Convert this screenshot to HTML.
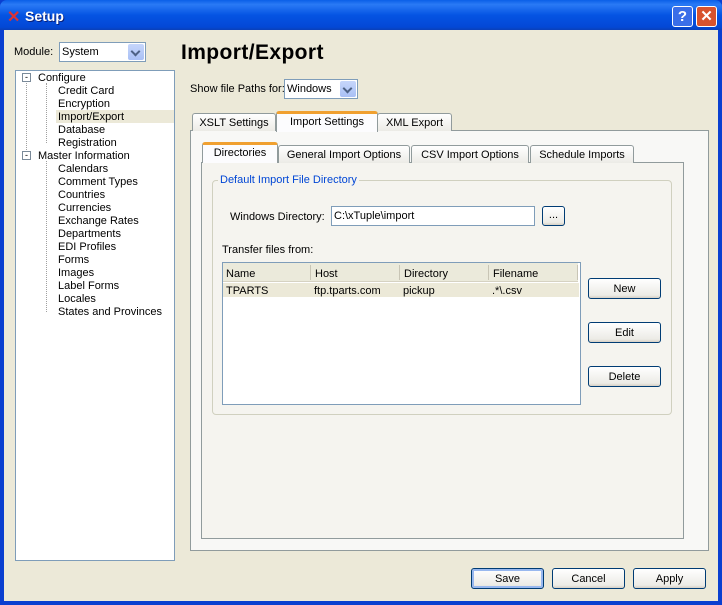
<!DOCTYPE html>
<html><head><style>
*{box-sizing:border-box;margin:0;padding:0}
body{width:722px;height:605px;position:relative;overflow:hidden;font:11px "Liberation Sans",sans-serif;color:#000;background:#0a3fd0}
.a{position:absolute}
.win{left:4px;top:30px;width:714px;height:571px;background:#ece9d8}
.title{left:0;top:0;width:722px;height:30px;background:linear-gradient(#0a5fe8,#2a7af5 15%,#0554e3 50%,#0348d6 90%,#0a3fb8);border-radius:7px 7px 0 0}
.combo{background:#fff;border:1px solid #7f9db9}
.dd{position:absolute;right:1px;top:1px;bottom:1px;width:16px;background:linear-gradient(#c6d6fb,#a9c0f5);border-radius:2px}
.dd:after{content:"";position:absolute;left:4px;top:4px;width:5px;height:5px;border-right:2px solid #4d6185;border-bottom:2px solid #4d6185;transform:rotate(45deg)}
.tab{border:1px solid #919b9c;border-bottom:none;border-radius:3px 3px 0 0;background:linear-gradient(#fff,#ecebe6);text-align:center;line-height:18px}
.tab.sel{background:#fcfcfe;border-top:3px solid #f0a030;line-height:17px}
.pane{border:1px solid #919b9c;background:#f8f8f6}
.btn{border:1px solid #003c74;border-radius:3px;background:linear-gradient(#fff,#ecebe6 85%,#d6d0c5);text-align:center;line-height:20px}
.tree div{position:absolute;white-space:nowrap}
</style></head><body>
<div class="a title"></div>
<div class="a" style="left:7px;top:7px;color:#d33;font:bold 16px 'Liberation Sans';">✕</div>
<div class="a" style="left:25px;top:8px;color:#fff;font:bold 14px 'Liberation Sans',sans-serif;text-shadow:1px 1px #0a1e78">Setup</div>
<div class="a" style="left:672px;top:6px;width:21px;height:21px;border:1px solid #fff;border-radius:3px;background:#3a6ee8;color:#fff;font:bold 15px 'Liberation Sans';text-align:center;line-height:19px">?</div>
<div class="a" style="left:696px;top:6px;width:21px;height:21px;border:1px solid #fff;border-radius:3px;background:#d8532d;color:#fff;font:bold 15px 'Liberation Sans';text-align:center;line-height:19px">✕</div>
<div class="a win"></div>

<div class="a" style="left:14px;top:46px">Module:</div>
<div class="a combo" style="left:59px;top:42px;width:87px;height:20px"><span style="position:absolute;left:2px;top:3px">System</span><div class="dd"></div></div>

<div class="a" style="left:15px;top:70px;width:160px;height:491px;background:#fff;border:1px solid #7f9db9"></div>
<div class="a" style="left:56px;top:110px;width:118px;height:13px;background:#ece9d8"></div>
<div class="a" style="left:26px;top:83px;height:75px;border-left:1px dotted #a0a0a0"></div>
<div class="a" style="left:46px;top:83px;height:60px;border-left:1px dotted #a0a0a0"></div>
<div class="a" style="left:46px;top:161px;height:151px;border-left:1px dotted #a0a0a0"></div>
<div class="a" style="left:22px;top:73px;width:9px;height:9px;border:1px solid #7a8a99;background:#fff;font-size:9px;line-height:6px;text-align:center">-</div>
<div class="a" style="left:22px;top:151px;width:9px;height:9px;border:1px solid #7a8a99;background:#fff;font-size:9px;line-height:6px;text-align:center">-</div>
<div class="a tree" style="left:0;top:0">
<div style="left:38px;top:72px">Configure</div>
<div style="left:58px;top:85px">Credit Card</div>
<div style="left:58px;top:98px">Encryption</div>
<div style="left:58px;top:111px">Import/Export</div>
<div style="left:58px;top:124px">Database</div>
<div style="left:58px;top:137px">Registration</div>
<div style="left:38px;top:150px">Master Information</div>
<div style="left:58px;top:163px">Calendars</div>
<div style="left:58px;top:176px">Comment Types</div>
<div style="left:58px;top:189px">Countries</div>
<div style="left:58px;top:202px">Currencies</div>
<div style="left:58px;top:215px">Exchange Rates</div>
<div style="left:58px;top:228px">Departments</div>
<div style="left:58px;top:241px">EDI Profiles</div>
<div style="left:58px;top:254px">Forms</div>
<div style="left:58px;top:267px">Images</div>
<div style="left:58px;top:280px">Label Forms</div>
<div style="left:58px;top:293px">Locales</div>
<div style="left:58px;top:306px">States and Provinces</div>
</div>

<div class="a" style="left:181px;top:41px;font:bold 21px 'Liberation Sans',sans-serif;letter-spacing:0.4px">Import/Export</div>
<div class="a" style="left:190px;top:83px">Show file Paths for:</div>
<div class="a combo" style="left:284px;top:79px;width:74px;height:20px"><span style="position:absolute;left:2px;top:3px">Windows</span><div class="dd"></div></div>

<div class="a pane" style="left:190px;top:130px;width:519px;height:421px"></div>
<div class="a tab" style="left:192px;top:113px;width:84px;height:18px">XSLT Settings</div>
<div class="a tab" style="left:377px;top:113px;width:75px;height:18px">XML Export</div>
<div class="a tab sel" style="left:276px;top:111px;width:102px;height:21px">Import Settings</div>

<div class="a pane" style="left:201px;top:162px;width:483px;height:377px;background:#f5f4ef"></div>
<div class="a tab" style="left:278px;top:145px;width:132px;height:18px">General Import Options</div>
<div class="a tab" style="left:411px;top:145px;width:118px;height:18px">CSV Import Options</div>
<div class="a tab" style="left:530px;top:145px;width:104px;height:18px">Schedule Imports</div>
<div class="a tab sel" style="left:202px;top:142px;width:76px;height:21px">Directories</div>

<div class="a" style="left:212px;top:180px;width:460px;height:235px;border:1px solid #d0d0bf;border-radius:4px"></div>
<div class="a" style="left:218px;top:174px;background:#f5f4ef;color:#0046d5;padding:0 2px">Default Import File Directory</div>
<div class="a" style="left:230px;top:211px">Windows Directory:</div>
<div class="a" style="left:331px;top:206px;width:204px;height:20px;background:#fff;border:1px solid #7f9db9;padding:3px 2px">C:\xTuple\import</div>
<div class="a btn" style="left:542px;top:206px;width:23px;height:20px;line-height:17px">...</div>
<div class="a" style="left:222px;top:244px">Transfer files from:</div>
<div class="a" style="left:222px;top:262px;width:359px;height:143px;background:#fff;border:1px solid #7f9db9"></div>
<div class="a" style="left:223px;top:263px;width:355px;height:19px;background:#ebeadb;border-bottom:1px solid #d6d2c2"></div>
<div class="a" style="left:310px;top:265px;height:15px;border-left:1px solid #c8c5b5"></div>
<div class="a" style="left:399px;top:265px;height:15px;border-left:1px solid #c8c5b5"></div>
<div class="a" style="left:488px;top:265px;height:15px;border-left:1px solid #c8c5b5"></div>
<div class="a" style="left:577px;top:265px;height:15px;border-left:1px solid #c8c5b5"></div>
<div class="a" style="left:226px;top:268px">Name</div>
<div class="a" style="left:315px;top:268px">Host</div>
<div class="a" style="left:404px;top:268px">Directory</div>
<div class="a" style="left:493px;top:268px">Filename</div>
<div class="a" style="left:223px;top:283px;width:356px;height:14px;background:#ece9d8"></div>
<div class="a" style="left:226px;top:285px">TPARTS</div>
<div class="a" style="left:314px;top:285px">ftp.tparts.com</div>
<div class="a" style="left:403px;top:285px">pickup</div>
<div class="a" style="left:492px;top:285px">.*\.csv</div>

<div class="a btn" style="left:588px;top:278px;width:73px;height:21px">New</div>
<div class="a btn" style="left:588px;top:322px;width:73px;height:21px">Edit</div>
<div class="a btn" style="left:588px;top:366px;width:73px;height:21px">Delete</div>

<div class="a btn" style="left:471px;top:568px;width:73px;height:21px;box-shadow:inset 0 0 0 2px #98b8ef">Save</div>
<div class="a btn" style="left:552px;top:568px;width:73px;height:21px">Cancel</div>
<div class="a btn" style="left:633px;top:568px;width:73px;height:21px">Apply</div>
</body></html>
